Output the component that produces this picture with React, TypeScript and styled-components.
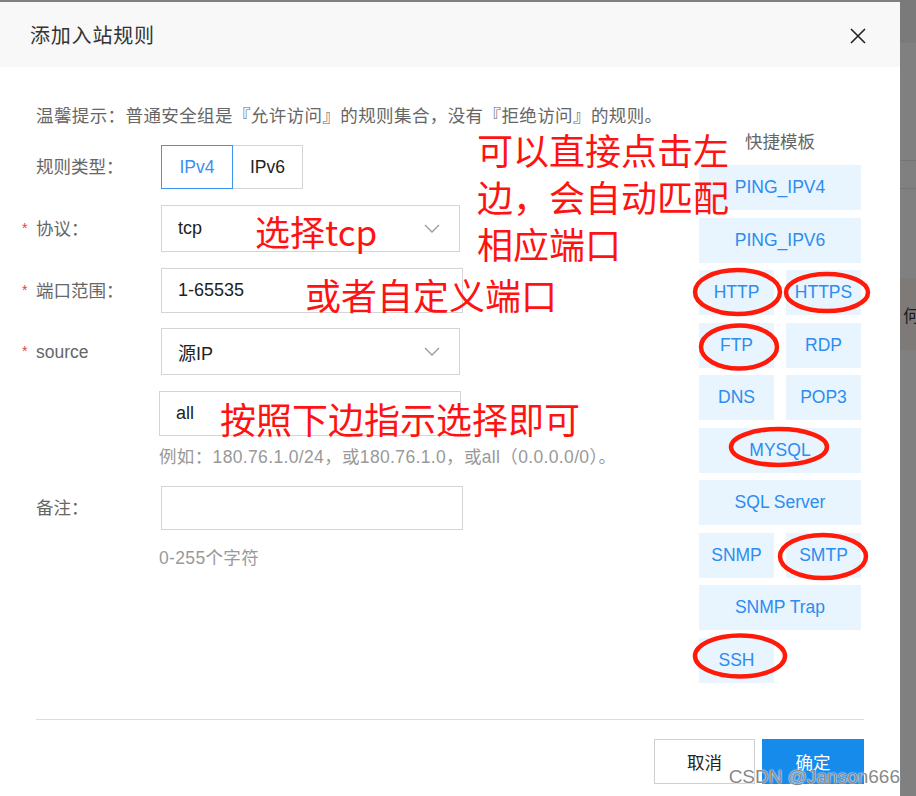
import React from "react";
import styled, { createGlobalStyle } from "styled-components";

const GlobalStyle = createGlobalStyle`
  html, body { margin: 0; padding: 0; background: #808080; }
  body { font-family: "Liberation Sans", "Noto Sans CJK SC", Arial, sans-serif; }
  * { box-sizing: border-box; }
`;

const Page = styled.div`
  position: relative;
  width: 916px;
  height: 796px;
  overflow: hidden;
  display: flex;
  align-items: flex-start;
  background: #808080;
  font-family: "Liberation Sans", "Noto Sans CJK SC", Arial, sans-serif;
`;

const Dialog = styled.div`
  width: 900px;
  height: 794px;
  margin-top: 2px;
  background: #fff;
  display: flex;
  flex-direction: column;
  flex-shrink: 0;
`;

const Header = styled.div`
  height: 65px;
  background: #f8f8f8;
  display: flex;
  align-items: center;
  justify-content: space-between;
  padding: 0 34px 0 30px;
`;

const Title = styled.div`
  font-size: 20px;
  color: #333;
  letter-spacing: 0.8px;
`;

const CloseButton = styled.div`
  width: 16px;
  height: 16px;
  display: flex;
  margin-top: 2px;
`;

const Body = styled.div`
  padding: 0 36px;
  display: flex;
  flex-direction: column;
`;

const Tip = styled.div`
  margin-top: 37px;
  margin-bottom: 4px;
  font-size: 17.5px;
  line-height: 24px;
  color: #666;
  letter-spacing: 0.4px;
`;

const Main = styled.div`
  display: flex;
  justify-content: space-between;
  align-items: flex-start;
`;

const FormColumn = styled.div`
  display: flex;
  flex-direction: column;
`;

const FormRow = styled.div<{ $top: number }>`
  display: flex;
  align-items: center;
  margin-top: ${(p) => p.$top}px;
`;

const Label = styled.div<{ $required?: boolean }>`
  position: relative;
  width: 125px;
  font-size: 17.5px;
  color: #666;
  line-height: 24px;
  &::before {
    content: ${(p) => (p.$required ? '"*"' : '""')};
    position: absolute;
    left: -14px;
    top: -1px;
    font-size: 14px;
    color: #e0463c;
  }
`;

const Segmented = styled.div`
  display: flex;
`;

const SegButton = styled.div<{ $active?: boolean; $w: number }>`
  position: relative;
  z-index: ${(p) => (p.$active ? 1 : 0)};
  width: ${(p) => p.$w}px;
  height: 44px;
  display: flex;
  align-items: center;
  justify-content: center;
  font-size: 17.5px;
  border: 1px solid ${(p) => (p.$active ? "#3a97f0" : "#d4d4d4")};
  color: ${(p) => (p.$active ? "#3a8ff0" : "#222")};
  & + & {
    margin-left: -1px;
  }
`;

const Select = styled.div<{ $h: number }>`
  width: 299px;
  height: ${(p) => p.$h}px;
  border: 1px solid #d5d5d5;
  display: flex;
  align-items: center;
  justify-content: space-between;
  padding: 0 19px 0 16px;
  font-size: 18px;
  color: #222;
`;

const Input = styled.div<{ $shift?: number; $h: number }>`
  width: 302px;
  height: ${(p) => p.$h}px;
  margin-left: ${(p) => p.$shift || 0}px;
  border: 1px solid #d5d5d5;
  display: flex;
  align-items: center;
  padding-left: 16px;
  font-size: 18px;
  color: #222;
`;

const Hint = styled.div<{ $top: number }>`
  margin-top: ${(p) => p.$top}px;
  margin-left: 123px;
  font-size: 17.5px;
  line-height: 24px;
  color: #999;
  letter-spacing: 0.35px;
`;

const TemplatePanel = styled.div`
  width: 162px;
  margin-right: 3px;
  display: flex;
  flex-direction: column;
  align-items: center;
`;

const PanelTitle = styled.div`
  font-size: 17.5px;
  line-height: 20px;
  color: #666;
  margin-bottom: 13px;
`;

const TemplateGrid = styled.div`
  display: grid;
  grid-template-columns: 75px 75px;
  grid-auto-rows: 45px;
  column-gap: 12px;
  row-gap: 7.5px;
`;

const TemplateCell = styled.div<{ $wide?: boolean }>`
  grid-column: ${(p) => (p.$wide ? "span 2" : "span 1")};
  background: #e8f4fe;
  color: #2d8cf0;
  font-size: 17.5px;
  display: flex;
  align-items: center;
  justify-content: center;
  white-space: nowrap;
`;

const Footer = styled.div`
  margin-top: 36px;
  border-top: 1px solid #dcdcdc;
  padding-top: 19px;
  display: flex;
  justify-content: flex-end;
  gap: 7px;
`;

const FooterButton = styled.div<{ $primary?: boolean }>`
  width: ${(p) => (p.$primary ? 102 : 101)}px;
  height: 45px;
  display: flex;
  align-items: center;
  justify-content: center;
  font-size: 17.5px;
  border: 1px solid ${(p) => (p.$primary ? "#168bec" : "#cfcfcf")};
  background: ${(p) => (p.$primary ? "#168bec" : "#fff")};
  color: ${(p) => (p.$primary ? "#fff" : "#222")};
`;

const BackdropStrip = styled.div`
  width: 16px;
  height: 796px;
  flex-shrink: 0;
  display: flex;
  flex-direction: column;
  overflow: hidden;
`;

const StripBlock = styled.div<{ $h: number; $bg: string }>`
  height: ${(p) => p.$h}px;
  background: ${(p) => p.$bg};
  flex-shrink: 0;
  display: flex;
  align-items: center;
  padding-left: 3px;
  font-size: 17.5px;
  color: #1e1e1e;
  white-space: nowrap;
  font-family: "Noto Sans CJK SC", sans-serif;
`;

const Annotation = styled.div<{ $x: number; $y: number; $size: number; $lh: number }>`
  position: absolute;
  left: ${(p) => p.$x}px;
  top: ${(p) => p.$y}px;
  font-family: "Noto Sans CJK SC", "Liberation Sans", sans-serif;
  font-size: ${(p) => p.$size}px;
  line-height: ${(p) => p.$lh}px;
  color: #ff1212;
  white-space: nowrap;
  pointer-events: none;
`;

const RingLayer = styled.svg`
  position: absolute;
  left: 0;
  top: 0;
  pointer-events: none;
`;

const Watermark = styled.div`
  position: absolute;
  right: 16px;
  top: 765px;
  font-family: "Liberation Sans", Arial, sans-serif;
  font-size: 19px;
  line-height: 24px;
  color: rgba(105, 105, 105, 0.8);
  text-shadow: 0 0 1px #fff, 0 0 2px #fff;
  pointer-events: none;
`;

const Chevron = () => (
  <svg width="16" height="9" viewBox="0 0 16 9">
    <polyline points="1,1 8,8 15,1" fill="none" stroke="#9a9a9a" strokeWidth="1.3" />
  </svg>
);

const templates: { name: string; wide?: boolean }[] = [
  { name: "PING_IPV4", wide: true },
  { name: "PING_IPV6", wide: true },
  { name: "HTTP" },
  { name: "HTTPS" },
  { name: "FTP" },
  { name: "RDP" },
  { name: "DNS" },
  { name: "POP3" },
  { name: "MYSQL", wide: true },
  { name: "SQL Server", wide: true },
  { name: "SNMP" },
  { name: "SMTP" },
  { name: "SNMP Trap", wide: true },
  { name: "SSH" },
];

const rings = [
  { cx: 737.5, cy: 292, rx: 42.5, ry: 22 },
  { cx: 827, cy: 292.5, rx: 41, ry: 18.5 },
  { cx: 739, cy: 347, rx: 38, ry: 21.5 },
  { cx: 779, cy: 447, rx: 48, ry: 18 },
  { cx: 823, cy: 556.5, rx: 43, ry: 21.5 },
  { cx: 740, cy: 656, rx: 45, ry: 20.5 },
];

export default function App() {
  return (
    <>
      <GlobalStyle />
      <Page>
        <Dialog>
          <Header>
            <Title>添加入站规则</Title>
            <CloseButton>
              <svg width="16" height="16" viewBox="0 0 16 16">
                <path d="M1 1 L15 15 M15 1 L1 15" stroke="#222" strokeWidth="1.6" fill="none" />
              </svg>
            </CloseButton>
          </Header>
          <Body>
            <Tip>温馨提示：普通安全组是『允许访问』的规则集合，没有『拒绝访问』的规则。</Tip>
            <Main>
              <FormColumn>
                <FormRow $top={13}>
                  <Label>规则类型：</Label>
                  <Segmented>
                    <SegButton $active $w={72}>IPv4</SegButton>
                    <SegButton $w={71}>IPv6</SegButton>
                  </Segmented>
                </FormRow>
                <FormRow $top={16}>
                  <Label $required>协议：</Label>
                  <Select $h={47}>
                    <span>tcp</span>
                    <Chevron />
                  </Select>
                </FormRow>
                <FormRow $top={16}>
                  <Label $required>端口范围：</Label>
                  <Input $h={45}>1-65535</Input>
                </FormRow>
                <FormRow $top={15}>
                  <Label $required>source</Label>
                  <Select $h={47}>
                    <span>源IP</span>
                    <Chevron />
                  </Select>
                </FormRow>
                <FormRow $top={16}>
                  <Label />
                  <Input $h={45} $shift={-2}>all</Input>
                </FormRow>
                <Hint $top={9}>例如：180.76.1.0/24，或180.76.1.0，或all（0.0.0.0/0）。</Hint>
                <FormRow $top={17}>
                  <Label>备注：</Label>
                  <Input $h={44} />
                </FormRow>
                <Hint $top={16}>0-255个字符</Hint>
              </FormColumn>
              <TemplatePanel>
                <PanelTitle>快捷模板</PanelTitle>
                <TemplateGrid>
                  {templates.map((t) => (
                    <TemplateCell key={t.name} $wide={t.wide}>
                      {t.name}
                    </TemplateCell>
                  ))}
                </TemplateGrid>
              </TemplatePanel>
            </Main>
            <Footer>
              <FooterButton>取消</FooterButton>
              <FooterButton $primary>确定</FooterButton>
            </Footer>
          </Body>
        </Dialog>
        <BackdropStrip>
          <StripBlock $h={43} $bg="#7a7a7a" />
          <StripBlock $h={117} $bg="#808080" />
          <StripBlock $h={1} $bg="#747474" />
          <StripBlock $h={27} $bg="#808080" />
          <StripBlock $h={1} $bg="#747474" />
          <StripBlock $h={89} $bg="#808080" />
          <StripBlock $h={72} $bg="#7e7a77">何</StripBlock>
          <StripBlock $h={446} $bg="#808080" />
        </BackdropStrip>

        <Annotation $x={477} $y={126} $size={36} $lh={47}>
          可以直接点击左
          <br />
          边，会自动匹配
          <br />
          相应端口
        </Annotation>
        <Annotation $x={255} $y={210} $size={35} $lh={42}>
          选择tcp
        </Annotation>
        <Annotation $x={305} $y={273} $size={36} $lh={42}>
          或者自定义端口
        </Annotation>
        <Annotation $x={220} $y={397} $size={36} $lh={42}>
          按照下边指示选择即可
        </Annotation>

        <RingLayer width="916" height="796" viewBox="0 0 916 796">
          {rings.map((r, i) => (
            <ellipse key={i} cx={r.cx} cy={r.cy} rx={r.rx} ry={r.ry} fill="none" stroke="#ff1a0a" strokeWidth="4.5" />
          ))}
        </RingLayer>

        <Watermark>CSDN @Janson666</Watermark>
      </Page>
    </>
  );
}
